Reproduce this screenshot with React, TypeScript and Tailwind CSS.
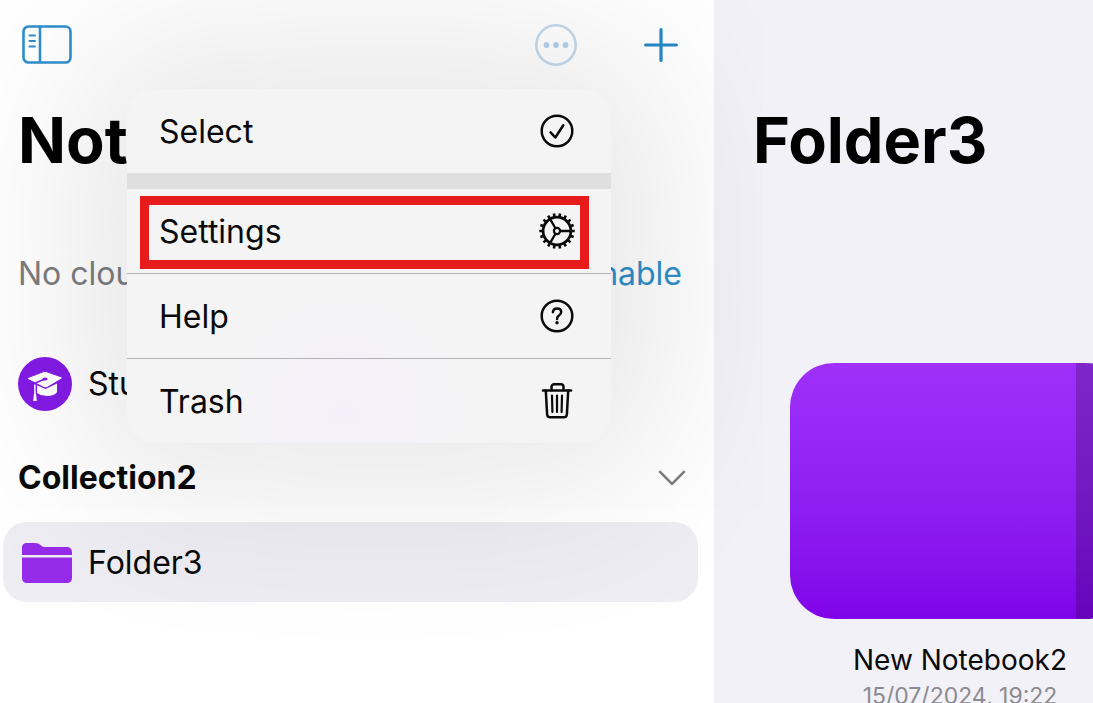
import type { ReactNode } from 'react';

const teeth = Array.from({ length: 18 }, (_, i) => i * 20);

function SidebarIcon() {
  return (
    <svg width="50" height="40" viewBox="0 0 50 40" fill="none" stroke="#2f8fcb" aria-hidden="true">
      <rect x="1.5" y="1.5" width="47" height="36" rx="5" strokeWidth="2.6" />
      <path d="M18 2v35" strokeWidth="2.6" />
      <path d="M7.5 10.5h5.5M7.5 16h5.5M7.5 21.5h5.5" strokeWidth="2" strokeLinecap="round" />
    </svg>
  );
}

function MoreIcon() {
  return (
    <svg width="42" height="42" viewBox="0 0 42 42" fill="none" aria-hidden="true">
      <circle cx="21" cy="21" r="19.7" stroke="#c2daee" strokeWidth="2.5" />
      <g fill="#b5d3ec">
        <circle cx="11.5" cy="21" r="2.9" />
        <circle cx="21" cy="21" r="2.9" />
        <circle cx="30.5" cy="21" r="2.9" />
      </g>
    </svg>
  );
}

function PlusIcon() {
  return (
    <svg width="34" height="34" viewBox="0 0 34 34" stroke="#2489c7" strokeWidth="3.2" strokeLinecap="round" aria-hidden="true">
      <path d="M17 1.6v30.8M1.6 17h30.8" />
    </svg>
  );
}

function CheckCircleIcon() {
  return (
    <svg width="36" height="36" viewBox="0 0 36 36" fill="none" stroke="#0a0a0a" strokeWidth="2.5" strokeLinecap="round" strokeLinejoin="round" aria-hidden="true">
      <circle cx="18" cy="18" r="15.3" />
      <path d="M11.6 19.4l4.7 5.1 8-12.3" />
    </svg>
  );
}

function GearIcon() {
  return (
    <svg width="36" height="36" viewBox="0 0 36 36" fill="none" stroke="#0a0a0a" aria-hidden="true">
      <circle cx="18" cy="18" r="13.9" strokeWidth="2.7" />
      <circle cx="18" cy="18" r="3.1" strokeWidth="2.2" />
      <path d="M21.4 18H31M16.3 15L11.4 6.6M16.3 21l-4.9 8.4" strokeWidth="2.3" />
      {teeth.map((angle) => (
        <path key={angle} d="M32 18h3.7" strokeWidth="2.6" transform={`rotate(${angle} 18 18)`} />
      ))}
    </svg>
  );
}

function HelpIcon() {
  return (
    <svg width="36" height="36" viewBox="0 0 36 36" fill="none" stroke="#0a0a0a" strokeWidth="2.5" strokeLinecap="round" strokeLinejoin="round" aria-hidden="true">
      <circle cx="18" cy="18" r="15.3" />
      <path d="M13.9 14.2c.2-2.3 1.8-3.6 4.2-3.6 2.4 0 4.1 1.4 4.1 3.5 0 1.7-.9 2.6-2.2 3.4-1.4.9-1.9 1.5-1.9 2.9v.5" />
      <circle cx="18" cy="24.7" r="1.7" fill="#0a0a0a" stroke="none" />
    </svg>
  );
}

function TrashIcon() {
  return (
    <svg width="36" height="40" viewBox="0 0 36 40" fill="none" stroke="#0a0a0a" strokeWidth="2.5" strokeLinecap="round" strokeLinejoin="round" aria-hidden="true">
      <path d="M4 9.5h28" />
      <path d="M12.5 9V6c0-1.7 1-2.7 2.7-2.7h6.6c1.7 0 2.7 1 2.7 2.7v3" />
      <path d="M6.8 9.5l1.3 23.7c.1 2 1.3 3.1 3.2 3.1h13.4c1.9 0 3.1-1.1 3.2-3.1l1.3-23.7" />
      <path d="M13 14.5l.4 16.500M18 14.5V31M23 14.5L22.6 31" strokeWidth="2.2" />
    </svg>
  );
}

function StudyIcon() {
  return (
    <svg width="54" height="54" viewBox="0 0 54 54" className="shrink-0" aria-hidden="true">
      <circle cx="27" cy="27" r="27" fill="#831ae6" />
      <path d="M18.5 28v7c3 5 17.500 5.500 20.500 0v-8.500l-11.500 5.500z" fill="#fff" />
      <path
        d="M10.200 20.600l15.400-6c.9-.3 1.700-.3 2.600 0l15 5.200c1.200.5 1.300 1.600.2 2.200L29.500 30.200c-1.400.7-2.600.7-4 .1L10.300 22.500c-1-.6-1-1.500-.1-1.900z"
        fill="#fff"
        stroke="#831ae6"
        strokeWidth="1"
      />
      <path d="M27 22l-8.500 3.500c-1 .5-1.500 1-1.500 2V34" fill="none" stroke="#831ae6" strokeWidth="1.500" />
      <path d="M15.300 26v9M18.500 27.500v8" stroke="#831ae6" strokeWidth="1.200" />
      <path d="M16.900 27.500V37" stroke="#fff" strokeWidth="1.500" />
      <ellipse cx="27" cy="22" rx="2.600" ry="1.600" fill="#831ae6" />
      <path d="M16 36.500h2l.8 7.500h-3.600z" fill="#fff" />
    </svg>
  );
}

function FolderIcon() {
  return (
    <svg width="50" height="42" viewBox="0 0 50 42" fill="#972bea" className="shrink-0" aria-hidden="true">
      <path d="M0 13V6c0-3.500 1.800-5 5-5h8c2.500 0 4 .7 5.500 2l1.200 1c1 .8 1.800 1 3.300 1h21.500C48 5 50 7 50 10v3z" />
      <path d="M0 15.500h50v20c0 3.700-1.800 5.500-5.500 5.500h-39C1.800 41 0 39.200 0 35.500z" />
    </svg>
  );
}

function ChevronIcon() {
  return (
    <svg width="28" height="16" viewBox="0 0 28 16" fill="none" stroke="#7d7d80" strokeWidth="2.6" strokeLinecap="round" strokeLinejoin="round" aria-hidden="true">
      <path d="M2 1.8l12 12 12-12" />
    </svg>
  );
}

function MenuItem({ label, icon, highlighted, divided }: { label: string; icon: ReactNode; highlighted?: boolean; divided?: boolean }) {
  return (
    <li role="none" className={divided ? 'relative border-t border-[#b4b4b7]' : 'relative'}>
      <button role="menuitem" type="button" className="flex h-[84px] w-full items-center justify-between pr-9 pl-8 text-left">
        <span className="pt-0.5">{label}</span>
        {icon}
      </button>
      {highlighted && <span className="pointer-events-none absolute top-[7px] right-[22px] bottom-1 left-[13px] border-9 border-[#e81b1c]" />}
    </li>
  );
}

export default function App() {
  return (
    <div className="relative flex h-screen overflow-hidden bg-white font-['Inter',sans-serif] text-[32px] leading-10 text-[#0a0a0a]">
      <aside className="relative w-[714px] shrink-0 bg-white">
        <header className="flex h-[90px] items-center justify-between pr-9 pl-[22px]">
          <button type="button" aria-label="Toggle sidebar">
            <SidebarIcon />
          </button>
          <div className="flex items-center gap-[67px]">
            <button type="button" aria-label="More options" aria-haspopup="menu" aria-expanded="true">
              <MoreIcon />
            </button>
            <button type="button" aria-label="Add">
              <PlusIcon />
            </button>
          </div>
        </header>
        <h1 className="h-[100px] pt-2.5 pl-[18px] text-[63px] leading-20 font-bold text-black">Notes</h1>
        <div className="flex h-[168px] items-center justify-between pr-8 pl-[18px] text-[#7d7d80]">
          <p>No cloud</p>
          <a href="#enable" className="text-[#2f8fcb]">Enable</a>
        </div>
        <nav className="-mt-4">
          <a href="#study" className="flex h-[84px] items-center gap-4 pl-[18px]">
            <StudyIcon />
            Study
          </a>
          <button type="button" aria-expanded="true" className="mt-1 flex h-[92px] w-full items-center justify-between pt-1 pr-7 pl-[18px] text-left font-bold">
            Collection2
            <ChevronIcon />
          </button>
          <a href="#folder3" className="mr-4 ml-[3px] flex h-20 items-center gap-4 rounded-3xl bg-[#eeedf4] pt-0.5 pl-[19px]">
            <FolderIcon />
            Folder3
          </a>
        </nav>
      </aside>

      <main className="min-w-0 flex-1 bg-[#f2f1f8]">
        <h2 className="pt-[100px] pl-[39px] text-[63px] leading-20 font-bold text-black">Folder3</h2>
        <article className="mt-[183px] ml-[76px] w-[340px] text-center">
          <div className="flex h-64 justify-end overflow-hidden rounded-[44px] bg-linear-to-b from-[#9f30fa] to-[#8003e9]">
            <div className="w-[54px] bg-black/20" />
          </div>
          <h3 className="mt-[25px] text-[28px] leading-8">New Notebook2</h3>
          <p className="mt-1 text-[23px] leading-8 text-[#8b8b90]">15/07/2024, 19:22</p>
        </article>
      </main>

      <ul
        role="menu"
        aria-label="More options"
        className="absolute top-[89px] left-[127px] w-[484px] overflow-clip rounded-[28px] bg-[#f4f4f5] bg-[radial-gradient(circle_at_45%_92%,#f4f0fb,#f4f4f5_28%)] shadow-[0_0_180px_40px_rgba(0,0,0,0.11)]"
      >
        <MenuItem label="Select" icon={<CheckCircleIcon />} />
        <li role="separator" className="h-4 bg-[#dfdfe0]" />
        <MenuItem label="Settings" icon={<GearIcon />} highlighted />
        <MenuItem label="Help" icon={<HelpIcon />} divided />
        <MenuItem label="Trash" icon={<TrashIcon />} divided />
      </ul>
    </div>
  );
}
